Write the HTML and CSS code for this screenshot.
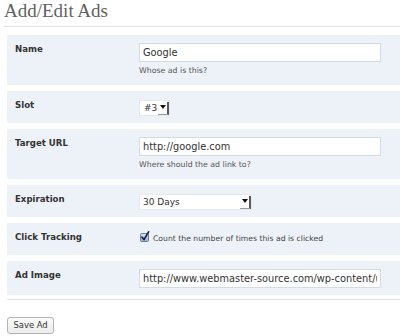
FILE: index.html
```html
<!DOCTYPE html>
<html>
<head>
<meta charset="utf-8">
<link rel="stylesheet" href="styles.css">
</head>
<body>
<div class="wrap">
  <h2 class="title">Add/Edit Ads</h2>
  <form class="form">
    <div class="rows">
      <div class="row">
        <div class="label">Name</div>
        <div class="field">
          <input class="text" type="text" value="Google">
          <div class="help">Whose ad is this?</div>
        </div>
      </div>
      <div class="row">
        <div class="label">Slot</div>
        <div class="field">
          <div class="select select-slot"><span class="sel-text">#3</span><span class="sel-btn"><svg width="6" height="4" viewBox="0 0 6 4"><polygon points="0,0 6,0 3,4" fill="#111"/></svg></span></div>
        </div>
      </div>
      <div class="row">
        <div class="label">Target URL</div>
        <div class="field">
          <input class="text" type="text" value="http://google.com">
          <div class="help">Where should the ad link to?</div>
        </div>
      </div>
      <div class="row">
        <div class="label">Expiration</div>
        <div class="field">
          <div class="select select-exp"><span class="sel-text">30 Days</span><span class="sel-btn"><svg width="6" height="4" viewBox="0 0 6 4"><polygon points="0,0 6,0 3,4" fill="#111"/></svg></span></div>
        </div>
      </div>
      <div class="row">
        <div class="label">Click Tracking</div>
        <div class="field">
          <div class="check">
            <svg class="cb" width="10" height="11" viewBox="0 0 10 11">
              <defs>
                <linearGradient id="cbg" x1="0" y1="0" x2="0" y2="1">
                  <stop offset="0" stop-color="#d6e4f7"/>
                  <stop offset="1" stop-color="#8fb2e3"/>
                </linearGradient>
              </defs>
              <rect x="0.5" y="2.5" width="8" height="8" rx="1.2" fill="url(#cbg)" stroke="#6f7f96" stroke-width="1"/>
              <path d="M2 6.2 L4 8.6 L8.6 0.8" fill="none" stroke="#111a3a" stroke-width="1.6" stroke-linecap="round" stroke-linejoin="round"/>
            </svg>
            <span class="check-text">Count the number of times this ad is clicked</span>
          </div>
        </div>
      </div>
      <div class="row">
        <div class="label">Ad Image</div>
        <div class="field">
          <input class="text" type="text" value="http://www.webmaster-source.com/wp-content/uploads/2009/01/ad.png">
        </div>
      </div>
    </div>
    <div class="submit">
      <button class="button" type="button">Save Ad</button>
    </div>
  </form>
</div>
</body>
</html>
```

FILE: styles.css
```css
html, body {
  margin: 0;
  padding: 0;
  background: #fff;
  overflow: hidden;
}
body {
  font-family: "DejaVu Sans", Verdana, sans-serif;
  color: #333;
}
.wrap {
  padding-left: 4px;
}
.title {
  margin: 0;
  font-family: "Liberation Serif", "Times New Roman", serif;
  font-weight: normal;
  font-size: 19px;
  line-height: 21px;
  color: #5f5f5f;
  padding-bottom: 5px;
  border-bottom: 1px solid #e3e3e3;
}
.form {
  margin: 8px 0 0 3px;
}
.rows {
  display: flex;
  flex-direction: column;
  gap: 6px;
  padding-bottom: 4px;
  border-bottom: 1px solid #dedede;
}
.row {
  display: grid;
  grid-template-columns: 124px 1fr;
  padding: 7px 0 7px 8px;
  background: #edf2f9;
}
.label {
  font-weight: bold;
  font-size: 8.6px;
  line-height: 13px;
  padding-top: 1px;
  color: #333;
}
.field {
  display: flex;
  flex-direction: column;
  align-items: flex-start;
}
.text {
  box-sizing: border-box;
  width: 242px;
  height: 19px;
  margin: 1px 0 0;
  padding: 0 3px;
  border: 1px solid #d2dce7;
  background: #fff;
  font-family: "DejaVu Sans", Verdana, sans-serif;
  font-size: 9.8px;
  color: #333;
  outline: none;
}
.help {
  margin: 3px 0 2px;
  font-size: 7.8px;
  line-height: 11px;
  color: #555;
}
.select {
  box-sizing: border-box;
  display: flex;
  align-items: stretch;
  height: 16px;
  margin-top: 2px;
  background: #fff;
  border: 1px solid #e4e9ef;
  font-size: 9px;
  color: #333;
}
.select-slot {
  width: 31px;
}
.select-exp {
  width: 113px;
}
.sel-text {
  flex: 1;
  line-height: 14px;
  padding-left: 3px;
  white-space: nowrap;
}
.select-slot .sel-text {
  padding-left: 4px;
}
.sel-btn {
  width: 9px;
  flex: none;
  display: flex;
  align-items: center;
  justify-content: center;
  border-right: 2px solid #5a5a5a;
  border-bottom: 1px solid #9a9a9a;
  margin: 1px 0 0;
}
.sel-btn svg {
  display: block;
  margin-bottom: 2px;
}
.check {
  display: flex;
  align-items: flex-start;
  height: 18px;
}
.cb {
  margin: 1px 0 0 1px;
  overflow: visible;
}
.check-text {
  margin-left: 3px;
  font-size: 7.7px;
  line-height: 18px;
  color: #444;
}
.submit {
  display: flex;
  padding-top: 17px;
}
.button {
  height: 17px;
  padding: 0 5.5px;
  border: 1px solid #b3b3b3;
  border-radius: 3px;
  background: linear-gradient(#fbfbfb, #ececec);
  font-family: "DejaVu Sans", Verdana, sans-serif;
  font-size: 8.4px;
  color: #333;
  line-height: 15px;
}
```
